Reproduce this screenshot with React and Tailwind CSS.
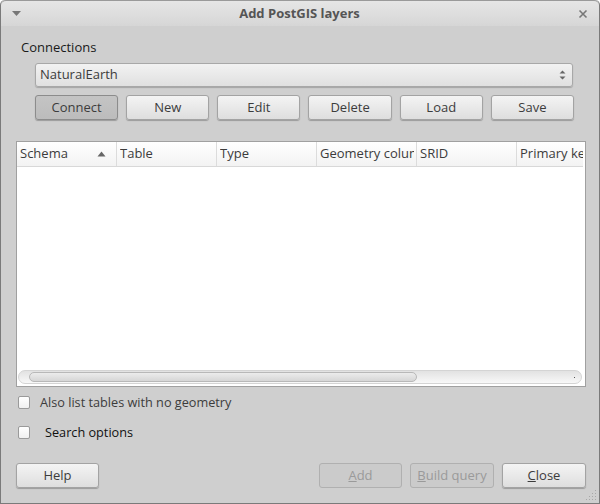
const cols = [
    { label: 'Schema', w: 'w-[100px]', sort: true },
    { label: 'Table', w: 'w-[100px]' },
    { label: 'Type', w: 'w-[100px]' },
    { label: 'Geometry column', w: 'w-[100px]' },
    { label: 'SRID', w: 'w-[100px]' },
    { label: 'Primary key', w: 'w-[100px]' },
]

function Btn({ children, pressed, disabled, className = '' }) {
    const base = 'h-[25px] rounded-[3px] border flex items-center justify-center text-[13px] shadow-[0_1px_1px_rgba(0,0,0,0.25)]'
    const look = pressed
        ? 'border-[#8c8c8c] bg-gradient-to-b from-[#c4c4c4] to-[#bcbcbc] text-[#3c3c3c]'
        : disabled
            ? 'border-[#b0b0b0] bg-[#cbcbcb] text-[#9a9a9a] shadow-none'
            : 'border-[#a3a3a3] bg-gradient-to-b from-[#f4f4f4] to-[#dedede] text-[#3c3c3c]'
    return <div className={`${base} ${look} ${className}`}>{children}</div>
}

function Check({ children, className = '' }) {
    return (
        <div className="flex items-center">
            <div className="w-[12px] h-[13px] rounded-[2px] border border-[#9a9a9a] bg-gradient-to-b from-white to-[#f0f0f0]" />
            <span className={`text-[12.7px] ${className}`}>{children}</span>
        </div>
    )
}

export default function App() {
    return (
        <div
            className="relative w-[600px] h-[504px] flex flex-col bg-[#cfcfcf] border border-t-0 border-[#7a7a7a] rounded-t-[5px] overflow-hidden"
            style={{ fontFamily: '"Open Sans", "Noto Sans", sans-serif' }}
        >
            {/* title bar */}
            <div className="h-[26px] shrink-0 flex items-center px-[11px] bg-gradient-to-b from-[#e6e6e6] to-[#d6d6d6] border-t border-[#9a9a9a] rounded-t-[5px]">
                <svg width="9" height="6" viewBox="0 0 9 6"><path d="M0 0h9L4.5 5z" fill="#777" /></svg>
                <div className="flex-1 text-center text-[13px] font-bold text-[#555]">Add PostGIS layers</div>
                <svg width="10" height="10" viewBox="0 0 10 10"><path d="M1.5 1.5l7 7M8.5 1.5l-7 7" stroke="#777" strokeWidth="1.6" /></svg>
            </div>

            <div className="flex-1 flex flex-col px-[14px]">
                {/* connections */}
                <div className="pl-[6px] pt-[12px] text-[13px] text-[#1a1a1a] leading-[18px]">Connections</div>
                <div className="pl-[20px] pr-[12px] pt-[7px]">
                    <div className="h-[24px] rounded-[3px] border border-[#a8a8a8] bg-gradient-to-b from-[#f2f2f2] to-[#e0e0e0] shadow-[0_1px_1px_rgba(0,0,0,0.2)] flex items-center pl-[4px] pr-[6px] text-[13px] text-[#3c3c3c]">
                        <span className="flex-1">NaturalEarth</span>
                        <svg width="7" height="12" viewBox="0 0 7 12"><path d="M0.5 4.5L3.5 1.5L6.5 4.5zM0.5 7.5L3.5 10.5L6.5 7.5z" fill="#666" /></svg>
                    </div>
                    <div className="grid grid-cols-6 gap-[8px] mt-[8px] mr-[-1px]">
                        <Btn pressed>Connect</Btn>
                        <Btn>New</Btn>
                        <Btn>Edit</Btn>
                        <Btn>Delete</Btn>
                        <Btn>Load</Btn>
                        <Btn>Save</Btn>
                    </div>
                </div>

                {/* table */}
                <div className="mt-[21px] ml-[1px] mr-[-1px] h-[246px] border border-[#a0a0a0] bg-white flex flex-col">
                    <div className="h-[25px] shrink-0 flex border-b border-[#d8d8d8] bg-gradient-to-b from-white to-[#f3f3f3] overflow-hidden mr-[2px]">
                        {cols.map(c => (
                            <div key={c.label} className={`${c.w} shrink-0 flex items-center pl-[3px] pr-[2px] border-r border-[#dcdcdc] text-[13px] text-[#3c3c3c] whitespace-nowrap overflow-hidden`}>
                                <span className="flex-1 min-w-0 overflow-hidden">{c.label}</span>
                                {c.sort && <svg width="9" height="6" viewBox="0 0 9 6" className="mr-[8px]"><path d="M0.5 5.5L4.5 0.5L8.5 5.5z" fill="#666" /></svg>}
                            </div>
                        ))}
                    </div>
                    <div className="flex-1" />
                    <div className="h-[14px] mb-[2px] mx-[1px] mr-[3px] rounded-full bg-gradient-to-b from-[#e2e2e2] to-[#f8f8f8] border border-[#d4d4d4] flex items-center relative">
                        <div className="ml-[10px] w-[388px] h-[10px] rounded-full border border-[#b8b8b8] bg-gradient-to-b from-[#ececec] to-[#d6d6d6]" />
                        <div className="absolute right-[6px] top-[6px] w-[1px] h-[1px] bg-[#555]" />
                    </div>
                </div>

                {/* options */}
                <div className="pl-[3px] pt-[6px] flex flex-col gap-[11px]">
                    <Check className="ml-[10px] text-[#3c3c3c]">Also list tables with no geometry</Check>
                    <Check className="ml-[15px] text-[#111]">Search options</Check>
                </div>

                {/* bottom buttons */}
                <div className="mt-auto mb-[15px] ml-[1px] mr-[-1px] flex items-center">
                    <Btn className="w-[83px]">Help</Btn>
                    <div className="flex-1" />
                    <div className="flex gap-[8px]">
                        <Btn disabled className="w-[83px]"><span><u>A</u>dd</span></Btn>
                        <Btn disabled className="w-[84px]"><span><u>B</u>uild query</span></Btn>
                        <Btn className="w-[84px]"><span><u>C</u>lose</span></Btn>
                    </div>
                </div>
            </div>

            {/* resize grip */}
            <svg className="absolute right-[2px] bottom-[2px]" width="11" height="11" viewBox="0 0 11 11">
                {[[9, 1], [9, 4], [6, 4], [9, 7], [6, 7], [3, 7], [9, 10], [6, 10], [3, 10], [0, 10]].map(([x, y]) => (
                    <rect key={`${x}-${y}`} x={x} y={y - 1} width="1" height="1" fill="#a8a8a8" />
                ))}
            </svg>
        </div>
    )
}
